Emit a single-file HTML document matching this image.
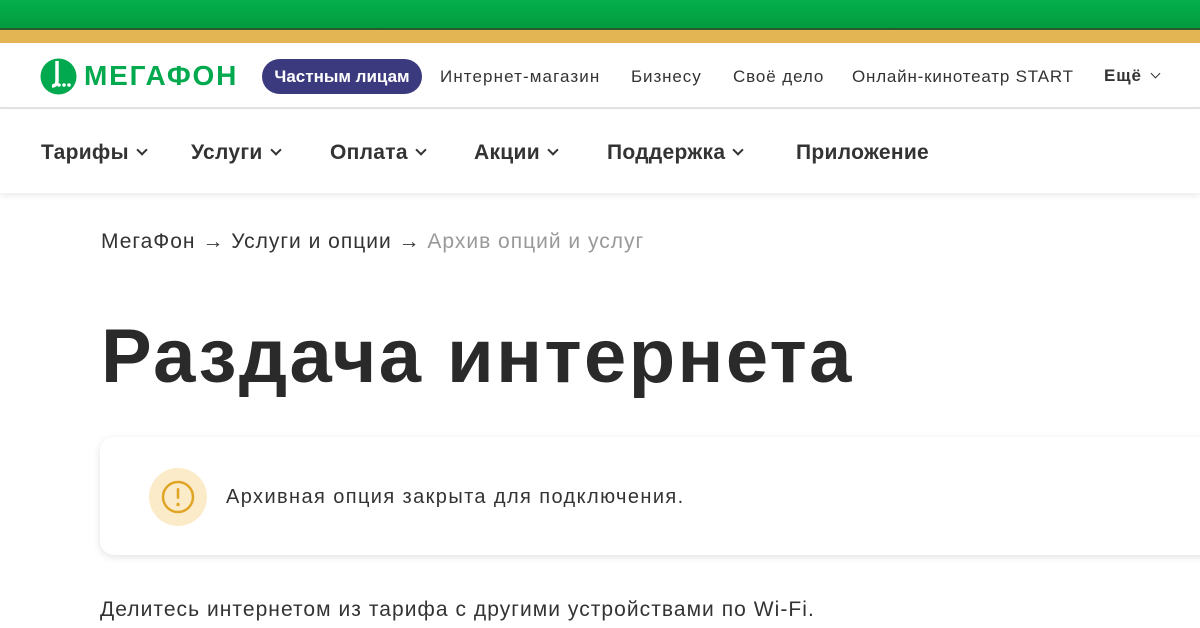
<!DOCTYPE html>
<html><head><meta charset="utf-8"><style>
*{margin:0;padding:0;box-sizing:border-box}
body{width:1200px;height:628px;overflow:hidden;background:#fff;font-family:"Liberation Sans",sans-serif;color:#333;position:relative}
.g{position:absolute;left:0;top:0;width:1200px;height:29px;background:linear-gradient(#06b04c,#019a3e)}
.dl{position:absolute;left:0;top:28px;width:1200px;height:2px;background:#2b5a2a}
.y{position:absolute;left:0;top:30px;width:1200px;height:13px;background:#e4b553}
.h1{position:absolute;top:43px;left:0;width:1200px;height:66px;border-bottom:2px solid #e2e2e2;background:#fff}
.t{position:absolute;font-size:17px;color:#333;white-space:nowrap;letter-spacing:0.9px}
.nav2{position:absolute;top:110px;left:0;width:1200px;height:83px;background:#fff;box-shadow:0 3px 6px rgba(0,0,0,.08)}
.n{position:absolute;top:141px;font-size:21px;font-weight:bold;color:#333;white-space:nowrap;letter-spacing:0.3px}
.chev{display:inline-block;width:8px;height:8px;border-right:2px solid #333;border-bottom:2px solid #333;transform:rotate(45deg);margin-left:9px;position:relative;top:-5px}
</style></head><body>
<div class="g"></div><div class="dl"></div><div class="y"></div>
<div class="h1"></div>
<svg style="position:absolute;left:40px;top:58px" width="37" height="37" viewBox="0 0 37 37"><circle cx="18.5" cy="18.5" r="18" fill="#03a94e"/><path d="M17 3 v20 c0 3 -2 5 -5 5" stroke="#fff" stroke-width="3.5" fill="none"/><circle cx="19" cy="27" r="1.8" fill="#fff"/><circle cx="24" cy="27" r="1.8" fill="#fff"/><circle cx="29" cy="27" r="1.8" fill="#fff"/></svg>
<div class="t" style="left:84px;top:60px;font-size:28px;font-weight:bold;color:#03a94e;letter-spacing:1.8px">МЕГАФОН</div>
<div style="position:absolute;left:262px;top:59px;width:160px;height:35px;border-radius:18px;background:#3c3a7e;color:#fff;font-size:17px;font-weight:bold;text-align:center;line-height:35px">Частным лицам</div>
<div class="t" style="left:440px;top:67px;letter-spacing:1.1px">Интернет-магазин</div>
<div class="t" style="left:631px;top:67px">Бизнесу</div>
<div class="t" style="left:733px;top:67px">Своё дело</div>
<div class="t" style="left:852px;top:67px;letter-spacing:0.8px">Онлайн-кинотеатр START</div>
<div class="t" style="left:1104px;top:66px;font-weight:bold">Ещё<span class="chev" style="width:7px;height:7px;border-width:1.5px;margin-left:10px;top:-4px"></span></div>
<div class="nav2"></div>
<div class="n" style="left:41px">Тарифы<span class="chev"></span></div>
<div class="n" style="left:191px">Услуги<span class="chev"></span></div>
<div class="n" style="left:330px">Оплата<span class="chev"></span></div>
<div class="n" style="left:474px">Акции<span class="chev"></span></div>
<div class="n" style="left:607px">Поддержка<span class="chev"></span></div>
<div class="n" style="left:796px">Приложение</div>
<div class="t" style="left:101px;top:230px;font-size:21px;letter-spacing:1px">МегаФон → Услуги и опции → <span style="color:#999">Архив опций и услуг</span></div>
<div class="t" style="left:101px;top:313px;font-size:76px;font-weight:bold;color:#2a2a2a;letter-spacing:2.4px">Раздача интернета</div>
<div style="position:absolute;left:100px;top:437px;width:1120px;height:118px;border-radius:14px;background:#fff;box-shadow:0 2px 8px rgba(0,0,0,.12)"></div>
<svg style="position:absolute;left:148px;top:467px" width="60" height="60" viewBox="0 0 60 60"><circle cx="30" cy="30" r="29" fill="#fbebc8"/><circle cx="30" cy="30" r="15" fill="none" stroke="#e1a525" stroke-width="2.5"/><rect x="28.7" y="21" width="2.6" height="11" rx="1.2" fill="#e1a525"/><circle cx="30" cy="37.5" r="1.7" fill="#e1a525"/></svg>
<div class="t" style="left:226px;top:486px;font-size:20px;letter-spacing:1.4px">Архивная опция закрыта для подключения.</div>
<div class="t" style="left:100px;top:598px;font-size:21px;letter-spacing:1.05px">Делитесь интернетом из тарифа с другими устройствами по Wi-Fi.</div>
</body></html>
